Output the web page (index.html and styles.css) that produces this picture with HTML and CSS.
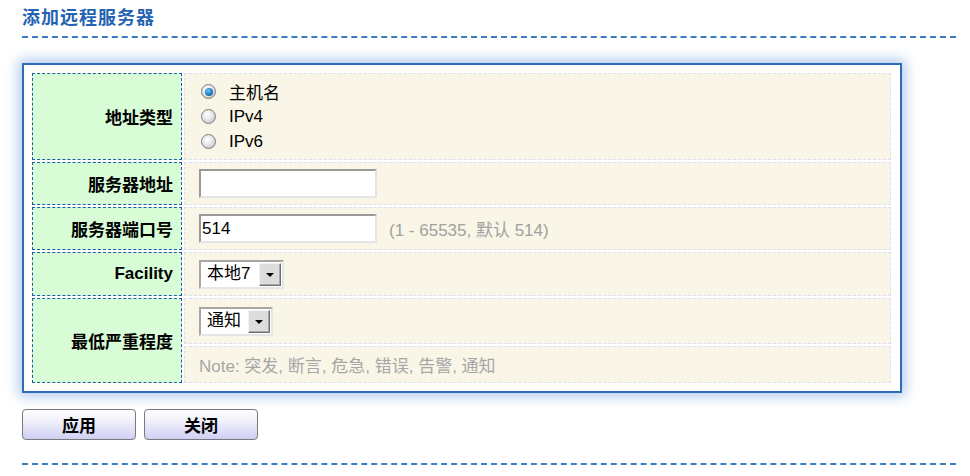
FILE: index.html
```html
<!DOCTYPE html>
<html lang="zh">
<head>
<meta charset="utf-8">
<title>添加远程服务器</title>
<link rel="stylesheet" href="styles.css">
</head>
<body>
<div class="page">
  <div class="title-bar"><h1 class="title">添加远程服务器</h1></div>

  <div class="panel">
    <div class="form-grid">
      <div class="lbl">地址类型</div>
      <div class="val radios">
        <label class="radio-row"><span class="radio checked"></span><span>主机名</span></label>
        <label class="radio-row"><span class="radio"></span><span>IPv4</span></label>
        <label class="radio-row"><span class="radio"></span><span>IPv6</span></label>
      </div>

      <div class="lbl">服务器地址</div>
      <div class="val"><input class="text-input" type="text" value=""></div>

      <div class="lbl">服务器端口号</div>
      <div class="val"><input class="text-input" type="text" value="514"><span class="hint">(1 - 65535, 默认 514)</span></div>

      <div class="lbl">Facility</div>
      <div class="val">
        <div class="select sel-facility"><span class="sel-text">本地7</span><span class="sel-btn"><span class="tri"></span></span></div>
      </div>

      <div class="lbl lbl-span">最低严重程度</div>
      <div class="val">
        <div class="select sel-level"><span class="sel-text">通知</span><span class="sel-btn"><span class="tri"></span></span></div>
      </div>
      <div class="val note">Note: 突发, 断言, 危急, 错误, 告警, 通知</div>
    </div>
  </div>

  <div class="actions">
    <button class="btn" type="button">应用</button>
    <button class="btn" type="button">关闭</button>
  </div>

  <div class="footer-line"></div>
</div>
</body>
</html>
```

FILE: styles.css
```css
* { box-sizing: border-box; }

html, body {
  margin: 0;
  padding: 0;
  background: #ffffff;
}

body {
  font-family: "Liberation Sans", "Noto Sans CJK SC", sans-serif;
  font-size: 17px;
  color: #000;
}

.page {
  margin: 0 14px 0 22px;
}

.title-bar {
  padding-top: 6px;
  height: 38px;
  border-bottom: 2px dashed #3a7cc6;
}

.title {
  margin: 0;
  font-size: 18px;
  line-height: 24px;
  font-weight: bold;
  color: #2463b2;
  letter-spacing: 1px;
}

.panel {
  margin-top: 25px;
  width: 880px;
  border: 2px solid #2d6cb6;
  padding: 8px 9px 8px 8px;
  background: #ffffff;
  box-shadow: 0 0 12px 3px rgba(70, 130, 210, 0.45);
}

.form-grid {
  display: grid;
  grid-template-columns: 150px 1fr;
  grid-template-rows: 87px 43px 43px 44px 46px 37px;
  gap: 2px;
}

.lbl {
  background: #d8fcd6;
  border: 1px dashed #1d5ea8;
  display: flex;
  align-items: center;
  justify-content: flex-end;
  padding-right: 8px;
  font-weight: bold;
  font-size: 17px;
}

.lbl-span {
  grid-row: span 2;
}

.val {
  background: #f9f6e7;
  border: 1px dashed #dcdff2;
  display: flex;
  align-items: center;
  padding-left: 14px;
}

.radios {
  flex-direction: column;
  align-items: flex-start;
  justify-content: flex-start;
  padding-top: 5px;
}

.radio-row {
  display: flex;
  align-items: center;
  height: 25px;
}

.radio {
  width: 15px;
  height: 15px;
  border-radius: 50%;
  border: 1px solid #7c7c7c;
  background: radial-gradient(circle at 40% 35%, #ffffff 0%, #e6e6e6 45%, #b8b8b8 100%);
  margin-left: 2px;
  margin-right: 13px;
  display: flex;
  align-items: center;
  justify-content: center;
}

.radio.checked::after {
  content: "";
  width: 8px;
  height: 8px;
  border-radius: 50%;
  background: radial-gradient(circle at 40% 35%, #7cc8f4 0%, #2a86cc 45%, #0b4a8a 100%);
}

.text-input {
  width: 178px;
  height: 29px;
  margin: 0;
  padding: 0 1px;
  font-family: "Liberation Sans", "Noto Sans CJK SC", sans-serif;
  font-size: 17px;
  color: #000;
  background: #fff;
  border-style: solid;
  border-width: 2px;
  border-color: #9a9a9a #e4e4e4 #e4e4e4 #9a9a9a;
  outline: none;
}

.hint {
  margin-left: 12px;
  color: #a0a0a0;
}

.select {
  display: flex;
  align-items: center;
  height: 29px;
  background: #fff;
  border-style: solid;
  border-width: 2px;
  border-color: #a6a6a6 #e6e6e6 #e6e6e6 #a6a6a6;
  padding: 1px;
}

.sel-facility { width: 85px; }
.sel-level { width: 74px; }

.sel-text {
  flex: 1;
  padding-left: 5px;
  line-height: 20px;
}

.sel-btn {
  width: 22px;
  height: 23px;
  border: 1px solid;
  border-color: #f4f4f4 #6e6e6e #6e6e6e #f4f4f4;
  background: #dcdcdc;
  box-shadow: inset -1px -1px 0 #a8a8a8;
  display: flex;
  align-items: center;
  justify-content: center;
}

.tri {
  width: 0;
  height: 0;
  border-left: 4px solid transparent;
  border-right: 4px solid transparent;
  border-top: 4px solid #000;
  margin-top: 1px;
}

.note {
  color: #a6a6a6;
}

.actions {
  display: flex;
  gap: 8px;
  margin-top: 16px;
}

.btn {
  width: 114px;
  height: 31px;
  border: 1px solid #7a7a7a;
  border-radius: 4px;
  background: linear-gradient(to bottom, #ffffff 0%, #f2f2fc 35%, #cfcff4 100%);
  font-family: "Liberation Sans", "Noto Sans CJK SC", sans-serif;
  font-size: 17px;
  font-weight: bold;
  color: #000;
  padding: 0;
}

.footer-line {
  margin-top: 23px;
  border-top: 2px dashed #3a7cc6;
}
```
